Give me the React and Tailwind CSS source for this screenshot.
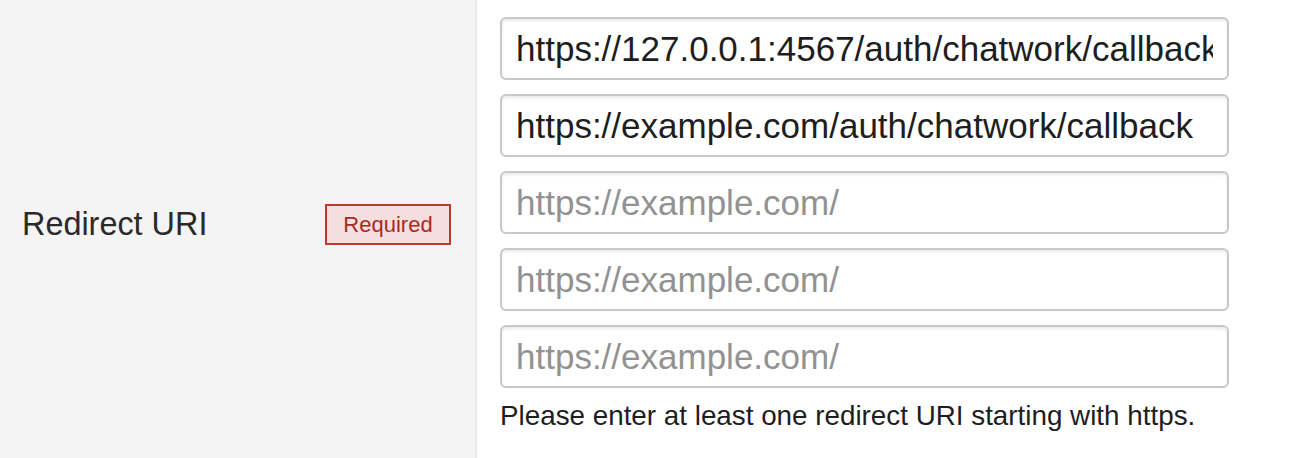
import React from "react";

const font = { fontFamily: '"Liberation Sans", Arial, Helvetica, sans-serif' };

function UriInput({ value, placeholder }) {
  return (
    <input
      type="text"
      defaultValue={value}
      placeholder={placeholder}
      className="block h-[63px] w-[729px] rounded-[6px] border-2 border-[#c8c8c8] bg-white px-[14px] text-[35px] text-[#1e1e1e] shadow-[inset_0_2px_3px_rgba(0,0,0,0.09)] outline-none placeholder:text-[#929292]"
      style={font}
    />
  );
}

export default function App() {
  return (
    <div className="flex h-[458px] w-[1300px] bg-white" style={font}>
      <div className="flex w-[477px] shrink-0 items-center border-r-2 border-[#e9e9e9] bg-[#f4f4f4] pb-[10px]">
        <div className="ml-[22px] w-[303px] text-[32.4px] text-[#2a2a2a]">Redirect URI</div>
        <span className="flex h-[41px] w-[126px] items-center justify-center border-2 border-[#bf3a2e] bg-[#f7dede] text-[22px] text-[#a62b22]">
          Required
        </span>
      </div>
      <div className="flex flex-col pl-[23px] pt-[17px]">
        <div className="flex flex-col gap-[14px]">
          <UriInput value="https://127.0.0.1:4567/auth/chatwork/callback" />
          <UriInput value="https://example.com/auth/chatwork/callback" />
          <UriInput placeholder="https://example.com/" />
          <UriInput placeholder="https://example.com/" />
          <UriInput placeholder="https://example.com/" />
        </div>
        <p className="mt-[12px] text-[27.8px] leading-[32px] text-[#1e1e1e]">
          Please enter at least one redirect URI starting with https.
        </p>
      </div>
    </div>
  );
}
